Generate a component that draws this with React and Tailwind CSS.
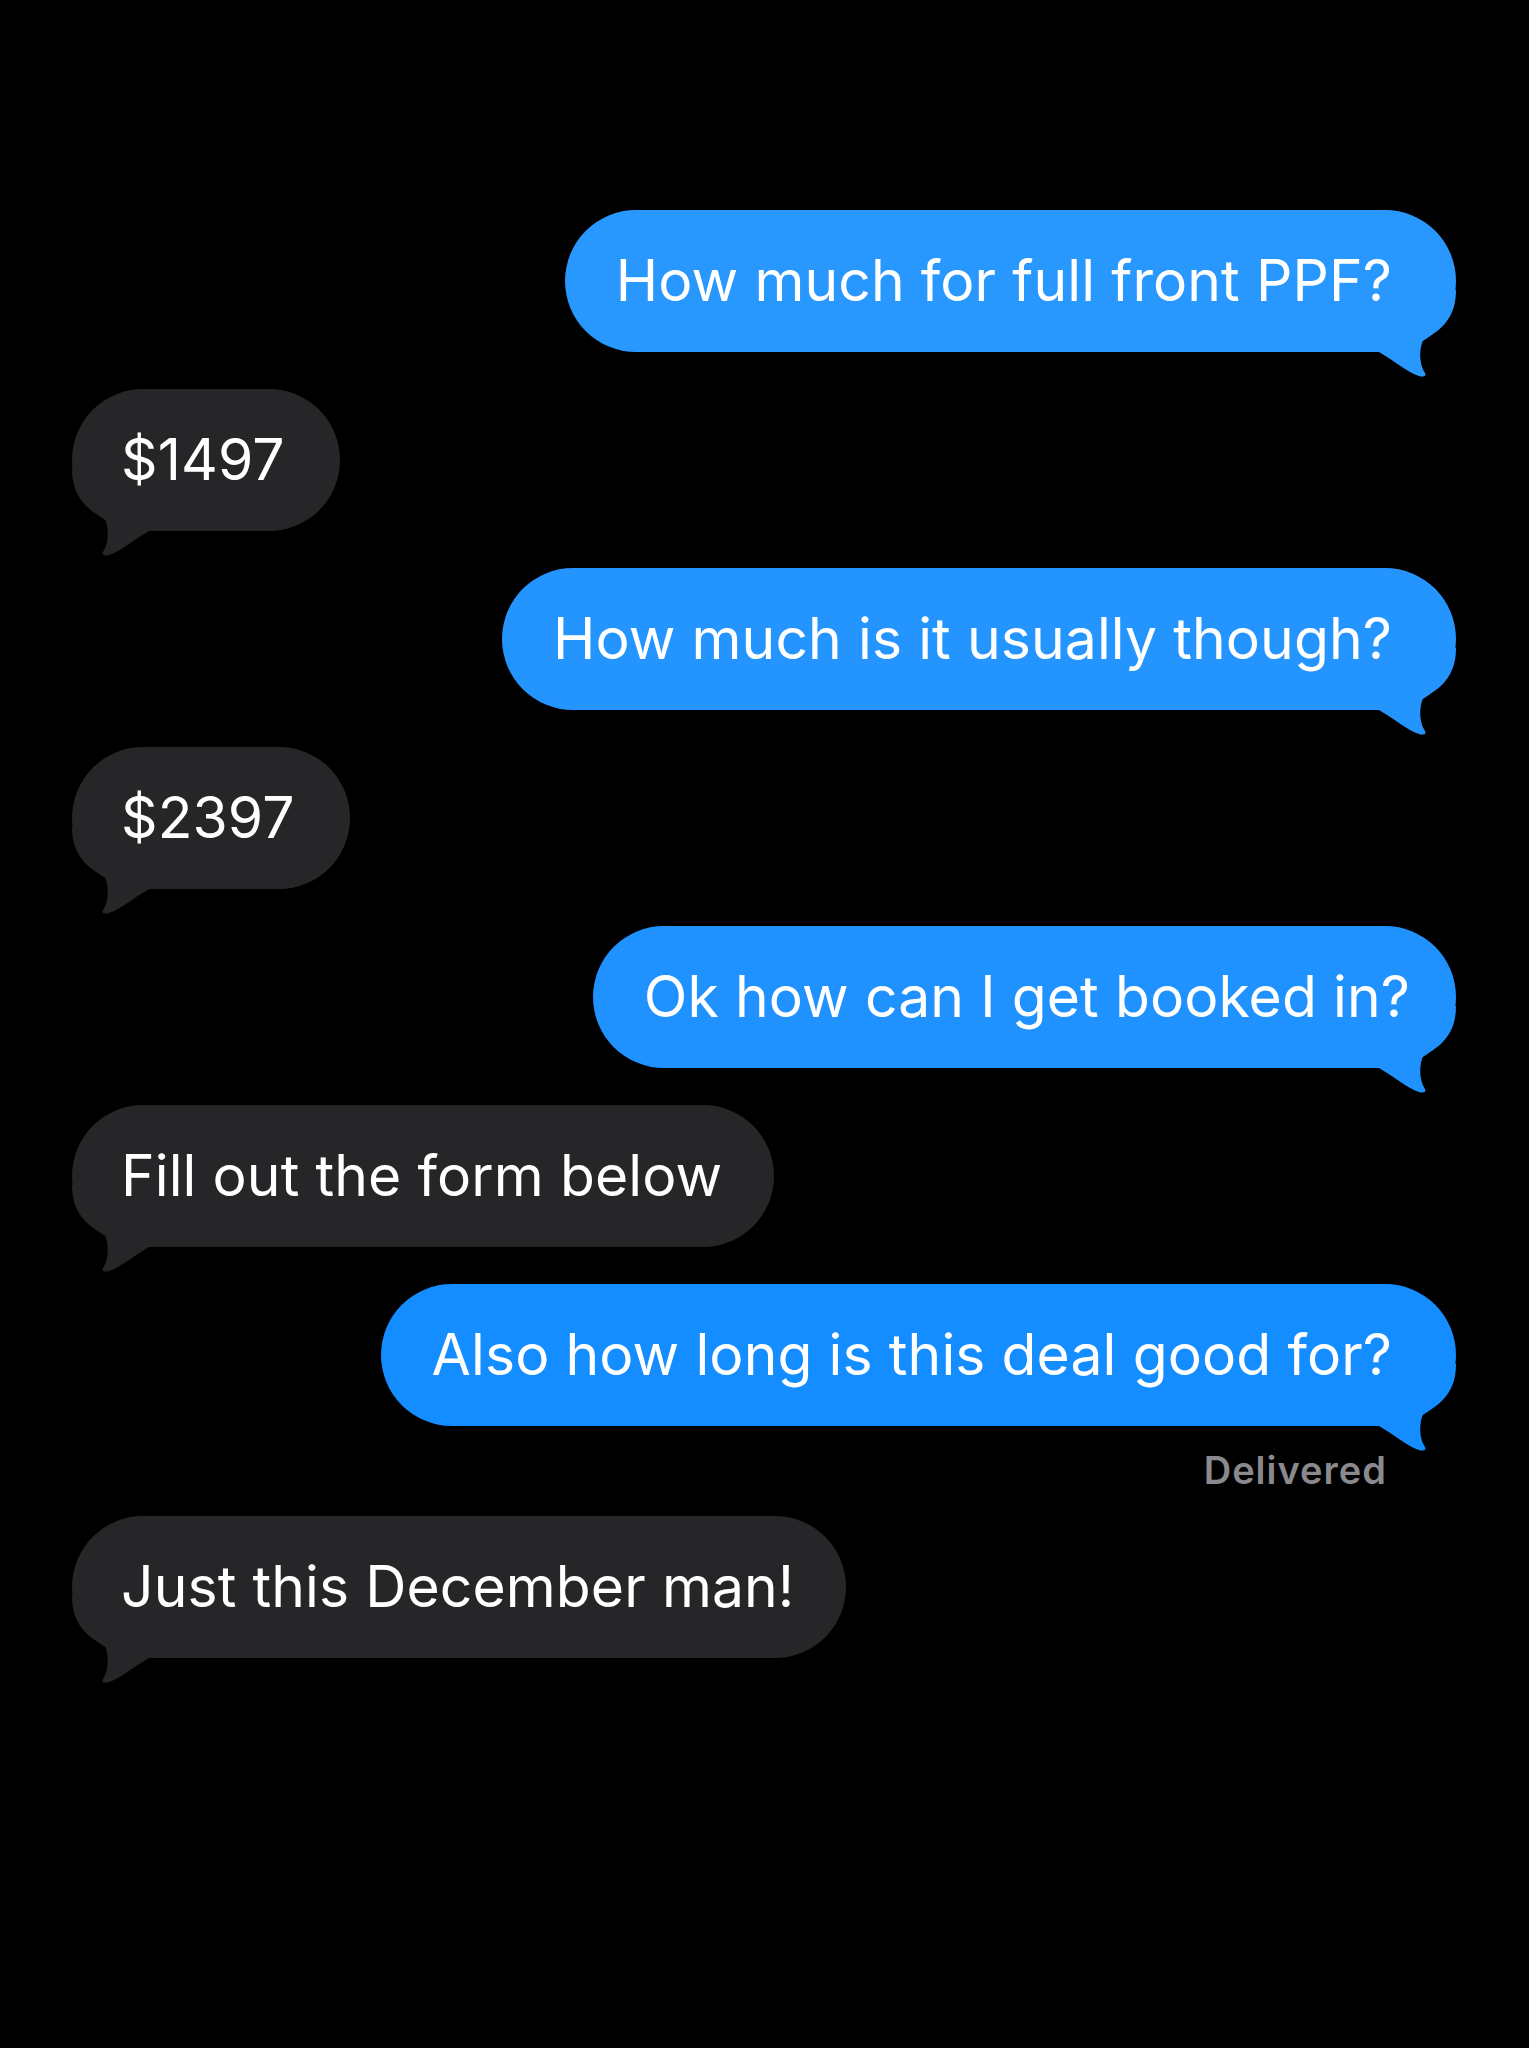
import React from "react";

const messages = [
  { from: "me", text: "How much for full front PPF?", color: "#2898FF" },
  { from: "them", text: "$1497", short: true },
  { from: "me", text: "How much is it usually though?", color: "#2495FF" },
  { from: "them", text: "$2397", short: true },
  { from: "me", text: "Ok how can I get booked in?", color: "#1F92FF", tight: true },
  { from: "them", text: "Fill out the form below" },
  { from: "me", text: "Also how long is this deal good for?", color: "#138DFF", delivered: true },
  { from: "them", text: "Just this December man!" },
];

// bubble tail, drawn for the right side; mirrored for received bubbles
const TAIL = "M0 0 L77 0 C77 22 68 38 44 50 C40 60 40 74 46 83 C48 87 43 87 40 86 C28 82 14 70 0 62 Z";

const Bubble = ({ from, text, color, tight, short }) => {
  const mine = from === "me";
  const fill = mine ? color : "#262628";

  let pad = short ? "pl-[49px] pr-[55px]" : "pl-[49px] pr-[52px]";
  if (mine) pad = tight ? "pl-[51px] pr-[46px]" : "pl-[51px] pr-[64px]";

  return (
    <div
      className={`relative h-[142px] flex items-center rounded-full text-white text-[57px] tracking-[0.1px] ${pad}`}
      style={{ backgroundColor: fill }}
    >
      <span className="relative z-10 whitespace-nowrap">{text}</span>
      <svg
        width="80"
        height="90"
        viewBox="0 0 80 90"
        className={`absolute bottom-[-28px] ${mine ? "right-[-3px]" : "left-[-3px] -scale-x-100"}`}
      >
        <path d={TAIL} fill={fill} />
      </svg>
    </div>
  );
};

const App = () => {
  return (
    <div
      className="min-h-[2048px] w-full bg-black pt-[210px] px-[72px]"
      style={{ fontFamily: "Inter, 'Noto Sans', sans-serif" }}
    >
      {messages.map((msg, i) => (
        <React.Fragment key={i}>
          <div
            className={`flex ${msg.from === "me" ? "justify-end pr-[1px]" : "justify-start"} ${
              msg.delivered ? "" : "mb-[37px]"
            }`}
          >
            <Bubble {...msg} />
          </div>
          {msg.delivered && (
            <div className="mt-[22px] mb-[24px] h-[44px] leading-[44px] text-right pr-[70px] text-[38px] tracking-[1px] font-semibold text-[#8a8a8e]">
              Delivered
            </div>
          )}
        </React.Fragment>
      ))}
    </div>
  );
};

export default App;
